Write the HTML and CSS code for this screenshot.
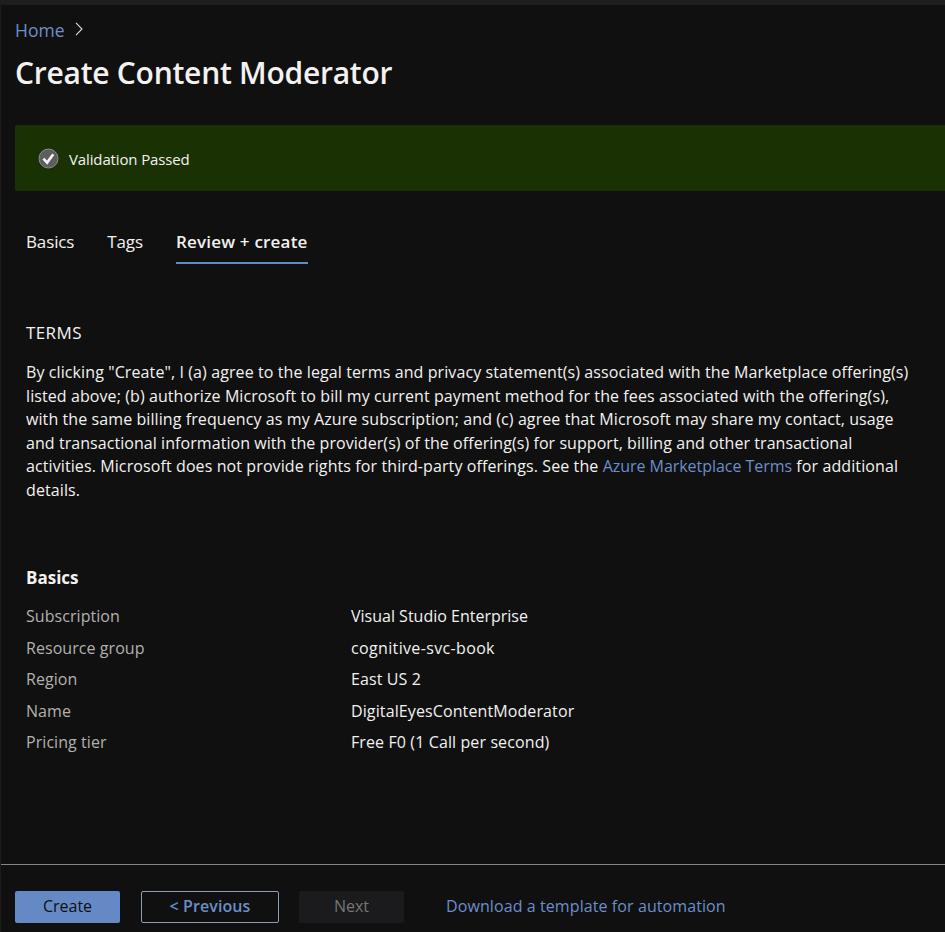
FILE: index.html
```html
<!DOCTYPE html>
<html lang="en">
<head>
<meta charset="utf-8">
<title>Create Content Moderator</title>
<link rel="stylesheet" href="styles.css">
</head>
<body>
<div class="page">
  <nav class="crumbs"><a class="home">Home</a><svg class="chevron" width="8" height="14" viewBox="0 0 8 14"><path d="M1 .8 7 7 1 13.200" fill="none" stroke="#ddd" stroke-width="1.100"/></svg></nav>
  <h1 class="title">Create Content Moderator</h1>
  <div class="banner">
    <svg width="21" height="21" viewBox="0 0 21 21"><circle cx="10.500" cy="10.500" r="9.500" fill="#5c5d60" stroke="#8b8b8b"/><path d="m5.400 10.600 3.700 4 6.200-8.400" fill="none" stroke="#f3f2f1" stroke-width="2.600"/></svg>
    <span class="banner-text">Validation Passed</span>
  </div>
  <div class="tabs">
    <span class="tab t-basics">Basics</span>
    <span class="tab t-tags">Tags</span>
    <span class="tab active">Review + create</span>
  </div>
  <main class="content">
    <h2 class="terms-title">TERMS</h2>
    <p class="terms">
      <span class="line l1">By clicking "Create", I (a) agree to the legal terms and privacy statement(s) associated with the Marketplace offering(s)</span>
      <span class="line l2">listed above; (b) authorize Microsoft to bill my current payment method for the fees associated with the offering(s),</span>
      <span class="line l3">with the same billing frequency as my Azure subscription; and (c) agree that Microsoft may share my contact, usage</span>
      <span class="line l4">and transactional information with the provider(s) of the offering(s) for support, billing and other transactional</span>
      <span class="line l5">activities. Microsoft does not provide rights for third-party offerings. See the <a class="link terms-link">Azure Marketplace Terms</a> for additional</span>
      <span class="line l6">details.</span>
    </p>
    <h2 class="section">Basics</h2>
    <dl class="summary">
      <dt>Subscription</dt><dd class="plain">Visual Studio Enterprise</dd>
      <dt>Resource group</dt><dd class="wide">cognitive-svc-book</dd>
      <dt>Region</dt><dd>East US 2</dd>
      <dt>Name</dt><dd>DigitalEyesContentModerator</dd>
      <dt>Pricing tier</dt><dd>Free F0 (1 Call per second)</dd>
    </dl>
  </main>
  <footer class="footer">
    <button class="btn primary">Create</button>
    <button class="btn outline">&lt; Previous</button>
    <button class="btn disabled">Next</button>
    <a class="link download">Download a template for automation</a>
  </footer>
</div>
</body>
</html>
```
FILE: styles.css
```css
* { box-sizing: border-box; margin: 0; padding: 0; }
body { background: #101010; color: #f3f2f1; font-family: "Open Sans", "Noto Sans", sans-serif; font-size: 16px; }
.page { height: 932px; display: flex; flex-direction: column; border-top: 5px solid #1e1e20; border-left: 1px solid #1b1b1c; overflow: hidden; }
.crumbs { display: flex; align-items: center; gap: 11px; height: 24px; margin: 12px 0 0 14px; font-size: 17.500px; }
.home { line-height: 26px; padding-top: 1px; }
.home, .link { color: #6b8fcb; }
.title { margin: 12px 0 0 14px; height: 40px; line-height: 40px; font-size: 30px; font-weight: 600; letter-spacing: -.25px; white-space: nowrap; }
.banner { margin: 32px 0 0 14px; height: 66px; background: #1a3103; border-radius: 2px 0 0 2px; display: flex; align-items: center; gap: 10px; padding-left: 23px; font-size: 15px; letter-spacing: -.13px; }
.banner-text { position: relative; top: 1px; }
.tabs { display: flex; margin: 38px 0 0 25px; height: 35px; line-height: 26px; font-size: 17px; gap: 33px; }
.tab { white-space: nowrap; letter-spacing: -.13px; }
.active { font-weight: 600; letter-spacing: .2px; border-bottom: 2px solid #6589c5; }
.content { margin-left: 25px; flex: 1; }
.terms-title { margin-top: 56px; height: 26px; line-height: 26px; font-size: 17px; font-weight: 400; letter-spacing: .4px; }
.terms { margin-top: 15px; line-height: 23.600px; }
.line { display: block; width: max-content; white-space: nowrap; letter-spacing: .1px; }
.l2, .l3 { letter-spacing: .088px; }
.l4 { letter-spacing: .06px; }
.terms-link { letter-spacing: -.04px; }
.section { margin-top: 62px; height: 26px; line-height: 26px; font-size: 17px; font-weight: 700; }
.summary { display: grid; grid-template-columns: 325px 1fr; grid-auto-rows: 31.500px; line-height: 31.500px; margin-top: 10.500px; }
dt { color: #b3b1af; letter-spacing: .06px; }
dd { letter-spacing: .11px; }
.plain { letter-spacing: 0; }
.wide { letter-spacing: .35px; }
.footer { height: 68px; border-top: 1px solid #868686; display: flex; align-items: flex-start; padding: 26px 0 0 14px; }
.btn { height: 32px; font: inherit; line-height: 28px; padding-bottom: 2px; border: 1px solid transparent; border-radius: 2px; }
.primary { width: 105px; background: #6589c5; color: #101010; }
.outline { width: 138px; margin-left: 21px; background: transparent; border-color: #8d9db8; color: #6b8fcb; font-weight: 600; letter-spacing: .1px; }
.disabled { width: 105px; margin-left: 20px; background: #1b1b1d; color: #777675; }
.download { margin-left: 42px; line-height: 30px; white-space: nowrap; letter-spacing: .09px; }
```
